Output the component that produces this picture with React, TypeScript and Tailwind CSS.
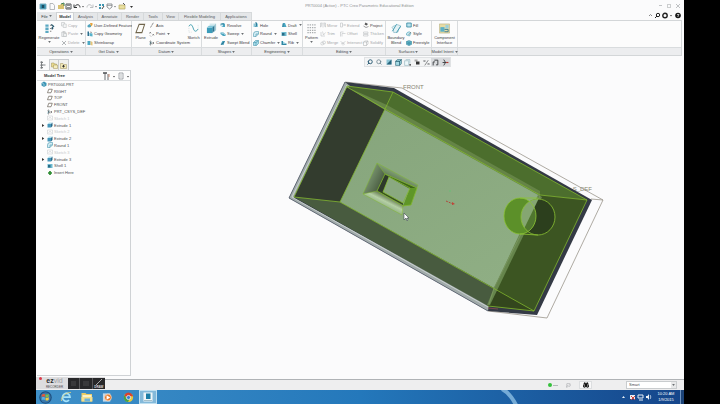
import React from 'react';
import { Search, Flag, Binoculars } from 'lucide-react';

type IconName =
  | 'copy' | 'paste' | 'delete' | 'udf' | 'copygeom' | 'wrap' | 'axis' | 'point' | 'csys'
  | 'revolve' | 'sweep' | 'blend' | 'hole' | 'round' | 'chamfer' | 'draft' | 'shell' | 'rib'
  | 'mirror' | 'trim' | 'merge' | 'extend' | 'offset' | 'intersect' | 'project' | 'thicken' | 'solidify'
  | 'fill' | 'style' | 'freestyle' | 'plane' | 'cube' | 'sketch' | 'part';

// 12x12 line drawings shared by the ribbon and the model tree
const glyphs: Record<IconName, React.ReactNode> = {
  copy: <g fill="#f4f5f5" stroke="#b4b8ba"><path d="M1 1h6v7H1z" /><path d="M4.500 4h6v7h-6z" /></g>,
  paste: <g fill="#eef0f0" stroke="#b0b4b6"><path d="M1.500 2h8v9h-8z" /><path d="M4 1h3v2H4zM5 5h6v6H5z" /></g>,
  delete: <path d="M2 2l8 8M10 2l-8 8" stroke="#9a9fa2" strokeWidth="1.500" />,
  udf: <g><path d="M1 7l4-3 3 2v4l-4 1-3-1z" fill="#4fa3bd" /><path d="M6 2h5v4l-3 3z" fill="#e8a33c" /></g>,
  copygeom: <g><path d="M1 1h3v9H1z" fill="#2d6d8c" /><path d="M5 4l6 1v6l-6-1z" fill="#58b2cb" /><path d="M6 2l4 1" stroke="#444" /></g>,
  wrap: <g><path d="M1 2h6v8H1z" fill="#4da9c4" /><path d="M7 2l4 2v7l-4-1z" fill="#e6c47a" /></g>,
  axis: <path d="M3 11L9 1" stroke="#4a4a4a" strokeDasharray="5 1" strokeWidth="1.200" />,
  point: <g stroke="#444"><path d="M1 2l3 3M4 2L1 5M7 6l3 3M10 6L7 9M2 9l2 2" /></g>,
  csys: <g stroke="#444" fill="none"><path d="M3 1v10M1 3l5 6M3 6h7M8 4l2 2-2 2" /><path d="M1 9l4-6" stroke="#2f7f97" /></g>,
  revolve: <g><path d="M1 7a5 4 0 0 1 9-3v6H5z" fill="#4ba6c2" /><path d="M1 4h7" stroke="#2c6177" /><circle cx="4" cy="7" r="2" fill="#d7eef5" /></g>,
  sweep: <g><path d="M1 3h6l4 4v3H6L1 6z" fill="#49a4bf" /><path d="M3 5h4l3 3" stroke="#e4f4f8" fill="none" /></g>,
  blend: <g><path d="M1 9L5 2h5L7 10z" fill="#3f9ab8" /><path d="M2 10L9 3" stroke="#24586d" /></g>,
  hole: <g><path d="M1 3h9v7H1z" fill="#8ccadb" /><path d="M4 1h4v8H4z" fill="#2d7f9c" /><path d="M5 2h1v6H5z" fill="#fff" /></g>,
  round: <g stroke="#2f87a3" fill="#d3edf4"><path d="M1 11V6a5 5 0 0 1 5-5h5v5l-5 5z" /><path d="M6 11V6h5" fill="none" /></g>,
  chamfer: <g stroke="#2f87a3" fill="#a9dbe8"><path d="M1 11V5l4-4h6v6l-4 4z" /><path d="M1 5h5l5-4M6 5v6" fill="none" /></g>,
  draft: <g fill="#4aa7c2"><path d="M2 10L4 2h4l3 8z" /><path d="M4 3v7" stroke="#1f566d" /></g>,
  shell: <g><path d="M1 2h10v8H1z" fill="#6fbbd0" /><path d="M2 4h5v5H2z" fill="#2a6c86" /></g>,
  rib: <g><path d="M1 10V2h3v5h7v3z" fill="#2f87a3" /><path d="M4 3l6 4H4z" fill="#8fd3e3" /></g>,
  mirror: <path d="M1 2h3l-2 8H1zM11 2H8l2 8h1zM6 1v10" stroke="#b2b6b8" fill="none" />,
  trim: <path d="M2 2v8h8M5 1l2 7 4-5" stroke="#b2b6b8" fill="none" />,
  merge: <g stroke="#b2b6b8" fill="none"><circle cx="4.500" cy="7" r="3" /><circle cx="8" cy="5" r="3" /></g>,
  extend: <path d="M1 2h4v8H1zM5 6h6M9 4l2 2-2 2" stroke="#b2b6b8" fill="none" />,
  offset: <path d="M1 11V2h6M4 11V5h7" stroke="#b2b6b8" fill="none" />,
  intersect: <path d="M1 3l5 3 5-3M6 6v5M2 8l4-2 4 3" stroke="#b2b6b8" fill="none" />,
  project: <g><path d="M5 1l5 3-3 3-4-2z" fill="#555" /><path d="M1 8l5 3 5-2" stroke="#444" fill="none" /></g>,
  thicken: <path d="M1 2h9v3H1zM1 7h9v3H1z" stroke="#b2b6b8" fill="none" />,
  solidify: <path d="M1 4l3-2h6v6l-3 3H1zM1 4h6l3-2M7 4v7" stroke="#a6abad" fill="none" />,
  fill: <path d="M1.500 2h9v8h-9z" fill="#b9e2ec" stroke="#2a7f9a" strokeWidth="1.500" />,
  style: <g><path d="M1 8a5 5 0 0 1 9-4l-3 6z" fill="#c7e9f0" stroke="#3691ac" /><path d="M5 8l5-6" stroke="#555" /></g>,
  freestyle: <g stroke="#2d7f97" fill="#66b9cc"><path d="M1 3l5-2 5 2v6l-5 2-5-2z" /><path d="M1 3l5 2 5-2M6 5v6M1 6l5 2 5-2" fill="none" /></g>,
  plane: <path d="M3.500 2.500h7l-2.500 7H1z" fill="#fff" stroke="#5c5548" strokeWidth="1.300" />,
  cube: <g><path d="M1 4h7v7H1z" fill="#4797bb" /><path d="M1 4l3-3h7L8 4z" fill="#b5dfeb" /><path d="M8 4l3-3v7l-3 3z" fill="#2c6a8a" /></g>,
  sketch: <g stroke="#c3c7c9" fill="none"><path d="M1 2h10v8H1z" /><path d="M3 8l3-4 3 4" /></g>,
  part: <g><path d="M1 4l5-3 5 3v5l-5 3-5-3z" fill="#3d95b5" /><path d="M2 4l4 2v5" stroke="#d9f1f7" fill="none" /></g>,
};

const Glyph: React.FC<{ name: IconName }> = ({ name }) => (
  <svg viewBox="0 0 12 12" className="h-[6px] w-[6px] shrink-0" fill="none" aria-hidden="true">
    {glyphs[name]}
  </svg>
);

const Caret = () => (
  <svg viewBox="0 0 4 3" className="h-[2px] w-[3px] shrink-0" aria-hidden="true">
    <path d="M0 0h4L2 3z" fill="#6b6f72" />
  </svg>
);

interface Command {
  icon: IconName;
  label: string;
  menu?: boolean;
  off?: boolean;
}

const CommandColumn: React.FC<{ items: Command[]; className?: string }> = ({ items, className = '' }) => (
  <div className={`grid grid-rows-3 ${className}`}>
    {items.map((item) => (
      <button
        key={item.label}
        disabled={item.off}
        className={`flex items-center gap-px whitespace-nowrap ${item.off ? 'text-[#a5a8aa]' : 'text-[#3d4043]'}`}
      >
        <Glyph name={item.icon} />
        {item.label}
        {item.menu && <span className="pl-px"><Caret /></span>}
      </button>
    ))}
  </div>
);

const BigButton: React.FC<{ label: string; menu?: boolean; className: string; children: React.ReactNode }> = ({
  label,
  menu,
  className,
  children,
}) => (
  <button className={`flex shrink-0 flex-col items-center pt-[2px] text-[#3d4043] ${className}`}>
    <svg viewBox="0 0 24 24" className="h-[11px] w-[11px]" fill="none" aria-hidden="true">{children}</svg>
    <span className="pt-px leading-[5px]">{label}</span>
    {menu && <span className="pt-px"><Caret /></span>}
  </button>
);

const Group: React.FC<{ title: string; className: string; children: React.ReactNode }> = ({ title, className, children }) => (
  <section className={`flex shrink-0 flex-col border-r border-[#d9dcde] ${className}`}>
    <div className="flex h-[26px] bg-[#fcfcfc]">{children}</div>
    <button className="flex h-[8px] items-center justify-center gap-px border-t border-[#d9dcde] bg-[#ecedef] whitespace-nowrap text-[#44474a]">
      {title} <Caret />
    </button>
  </section>
);

const tabs = [
  { label: 'Analysis', width: 'w-[24px]' },
  { label: 'Annotate', width: 'w-[24px]' },
  { label: 'Render', width: 'w-[22px]' },
  { label: 'Tools', width: 'w-[19px]' },
  { label: 'View', width: 'w-[16px]' },
  { label: 'Flexible Modeling', width: 'w-[42px]' },
  { label: 'Applications', width: 'w-[31px]' },
];

const TitleBar = () => (
  <header className="grid h-[11px] grid-cols-[1fr_auto_1fr] items-center pr-[4px] pl-[3px] text-[#8d9092]">
    <svg viewBox="0 0 100 10" className="h-[10px] w-[100px]" fill="none" role="img" aria-label="Quick access toolbar">
      <path d="M1 3h6v5H1z" fill="#2d87a5" stroke="#7fb1c3" />
      <path d="M3 4h2v3H3z" fill="#1d4d62" />
      <path d="M11 2.500h3l1.500 2v4H11z" stroke="#a6aaac" strokeWidth=".8" />
      <path d="M19 4h2l1-1h3v5h-6z" fill="#d9c271" /><path d="M22 3l3-1v3" stroke="#3a7d4e" />
      <path d="M27 3h5v5h-5z" stroke="#55595c" /><path d="M28 3h3v2h-3zM28 6h3v2h-3z" fill="#8b8f92" />
      <path d="M36 5.500C37 3 41 3 41 6.500M35 3.500v3h3" stroke="#2f3234" />
      <path d="M43 5h2l-1 1.500z" fill="#555" />
      <path d="M53 5.500C52 3 48 3 48 6.500M54 3.500v3h-3" stroke="#bcbfc1" />
      <path d="M56 5h2l-1 1.500z" fill="#777" />
      <path d="M60 3h2v2h-2zM60 6h2v2h-2zM63 3h2v2h-2z" fill="#3b94b0" /><path d="M63 8l2-3" stroke="#444" />
      <path d="M68 3h5v3l-2.500 2L68 6z" stroke="#777b7e" strokeWidth=".8" /><path d="M68 4.500h5" stroke="#777b7e" strokeWidth=".6" />
      <path d="M75 5h2l-1 1.500z" fill="#777" />
      <path d="M80 4h6v4h-6z" fill="#e9df9f" stroke="#b8ab64" strokeWidth=".7" /><path d="M84 2l2 2" stroke="#555" />
      <path d="M91 5h3l-1.500 2z" fill="#333" />
    </svg>
    <h1 className="whitespace-nowrap">PRT0004 (Active) - PTC Creo Parametric Educational Edition</h1>
    <div className="flex items-center justify-end gap-[5px]">
      <button aria-label="Minimize" className="h-px w-[3px] bg-[#c2c4c6]" />
      <button aria-label="Restore" className="h-[4px] w-[4px] border border-[#cccecf]" />
      <button aria-label="Close" className="h-[4px] w-[4px]">
        <svg viewBox="0 0 4 4" className="h-[4px] w-[4px]"><path d="M0 0l4 4M4 0L0 4" stroke="#bfc1c3" /></svg>
      </button>
    </div>
  </header>
);

const TabRow = () => (
  <nav className="flex h-[9px] items-stretch justify-between pt-px pl-px">
    <div className="flex bg-[#e5e7e9] text-[#55585b]">
      <button className="flex w-[19px] items-center justify-center gap-px text-[#33363a]">File <Caret /></button>
      <button className="w-[18px] border-x border-t border-[#cfd2d4] bg-[#fcfcfc] font-bold text-[#2f3235]">Model</button>
      {tabs.map((tab) => (
        <button key={tab.label} className={`border-t border-r border-[#d6d9db] whitespace-nowrap ${tab.width}`}>
          {tab.label}
        </button>
      ))}
    </div>
    <svg viewBox="0 0 36 8" className="h-[8px] w-[36px]" fill="none" role="img" aria-label="Search, settings and help">
      <path d="M1 4l1.500-1.500L4 4" stroke="#888" />
      <circle cx="10" cy="3" r="1.700" stroke="#222" /><path d="M9 4L7 6" stroke="#222" />
      <circle cx="17" cy="3.500" r="2.200" stroke="#222" strokeWidth="1.400" />
      <path d="M22 3h2l-1 1.500z" fill="#444" />
      <circle cx="30" cy="3.500" r="2.800" fill="#161616" /><path d="M29 2.500h2L30 4v1" stroke="#fff" strokeWidth=".7" />
    </svg>
  </nav>
);

const Ribbon = () => (
  <div className="mr-[2px] ml-px flex border-y border-r border-[#d3d6d8] bg-[#fcfcfc]">
    <Group title="Operations" className="w-[49px]">
      <BigButton label="Regenerate" menu className="w-[24px]">
        <path d="M3 3h7v5H3zM3 10h7v5H3zM3 17h7v5H3z" fill="#5ba8c2" />
        <path d="M13 5h5M13 12h4M13 18h3" stroke="#777" strokeWidth="2" />
        <path d="M16 3l5 4-4 4M20 11l-3 3" stroke="#24566c" strokeWidth="2.500" />
      </BigButton>
      <CommandColumn
        items={[
          { icon: 'copy', label: 'Copy', off: true },
          { icon: 'paste', label: 'Paste', menu: true, off: true },
          { icon: 'delete', label: 'Delete', menu: true, off: true },
        ]}
      />
    </Group>
    <Group title="Get Data" className="w-[46px]">
      <CommandColumn
        className="pl-px"
        items={[
          { icon: 'udf', label: 'User-Defined Feature' },
          { icon: 'copygeom', label: 'Copy Geometry' },
          { icon: 'wrap', label: 'Shrinkwrap' },
        ]}
      />
    </Group>
    <Group title="Datum" className="w-[70px]">
      <BigButton label="Plane" className="w-[17px]">
        <path d="M9 3h12l-6 18H2z" fill="#fdfcf8" stroke="#70654c" strokeWidth="2.200" />
      </BigButton>
      <CommandColumn
        className="w-[37px]"
        items={[
          { icon: 'axis', label: 'Axis' },
          { icon: 'point', label: 'Point', menu: true },
          { icon: 'csys', label: 'Coordinate System' },
        ]}
      />
      <BigButton label="Sketch" className="w-[15px]">
        <path d="M2 7c5-8 8 0 10 6s6 7 10 0" stroke="#3a9aac" strokeWidth="2" />
        <path d="M2 7v13M22 4v9M2 20h8" stroke="#b9c7cb" strokeDasharray="2 2" />
      </BigButton>
    </Group>
    <Group title="Shapes" className="w-[50px]">
      <BigButton label="Extrude" className="w-[18px]">
        <path d="M8 1h14v14l-5 5H8z" fill="#d3e9ee" /><path d="M17 6l5-5v14l-5 5z" fill="#a3c9d4" />
        <path d="M2 10h12v12H2z" fill="#3b9cba" /><path d="M2 10l4-4h12l-4 4z" fill="#7fc6d9" /><path d="M14 10l4-4v11l-4 5z" fill="#2b7693" />
      </BigButton>
      <CommandColumn
        items={[
          { icon: 'revolve', label: 'Revolve' },
          { icon: 'sweep', label: 'Sweep', menu: true },
          { icon: 'blend', label: 'Swept Blend' },
        ]}
      />
    </Group>
    <Group title="Engineering" className="w-[51px]">
      <CommandColumn
        className="w-[29px] pl-px"
        items={[
          { icon: 'hole', label: 'Hole' },
          { icon: 'round', label: 'Round', menu: true },
          { icon: 'chamfer', label: 'Chamfer', menu: true },
        ]}
      />
      <CommandColumn
        items={[
          { icon: 'draft', label: 'Draft', menu: true },
          { icon: 'shell', label: 'Shell' },
          { icon: 'rib', label: 'Rib', menu: true },
        ]}
      />
    </Group>
    <Group title="Editing" className="w-[83px]">
      <BigButton label="Pattern" menu className="w-[17px]">
        <path d="M3 4h18M3 10h18M3 16h18M3 21h18" stroke="#a9adaf" strokeWidth="3" strokeDasharray="3 2" />
      </BigButton>
      <CommandColumn
        className="w-[20px]"
        items={[
          { icon: 'mirror', label: 'Mirror', off: true },
          { icon: 'trim', label: 'Trim', off: true },
          { icon: 'merge', label: 'Merge', off: true },
        ]}
      />
      <CommandColumn
        className="w-[23px]"
        items={[
          { icon: 'extend', label: 'Extend', off: true },
          { icon: 'offset', label: 'Offset', off: true },
          { icon: 'intersect', label: 'Intersect', off: true },
        ]}
      />
      <CommandColumn
        items={[
          { icon: 'project', label: 'Project' },
          { icon: 'thicken', label: 'Thicken', off: true },
          { icon: 'solidify', label: 'Solidify', off: true },
        ]}
      />
    </Group>
    <Group title="Surfaces" className="w-[46px]">
      <BigButton label="Boundary Blend" className="w-[20px]">
        <path d="M2 10c3-6 8-2 10-7l9 3c-1 7-5 5-6 14l-9 1c-1-5 1-8-4-11z" fill="#e4f2f5" stroke="#86b7c4" strokeWidth="1.500" />
        <path d="M3 18L12 3M12 21l9-14" stroke="#3b97af" strokeWidth="2" />
      </BigButton>
      <CommandColumn
        items={[
          { icon: 'fill', label: 'Fill' },
          { icon: 'style', label: 'Style' },
          { icon: 'freestyle', label: 'Freestyle' },
        ]}
      />
    </Group>
    <Group title="Model Intent" className="w-[26px]">
      <BigButton label="Component Interface" className="w-[25px]">
        <path d="M1 2h22v20H1z" fill="#e7dba4" stroke="#a8a271" />
        <path d="M3 9h9v10H3z" fill="#5bb0c6" /><path d="M14 4h7v8h-7z" fill="#9bd0dc" />
        <path d="M12 14h8v5h-8" stroke="#3a7c90" strokeWidth="2" />
      </BigButton>
    </Group>
    <div className="flex flex-1 flex-col">
      <div className="h-[26px]" />
      <div className="h-[8px] border-t border-[#d9dcde] bg-[#ecedef]" />
    </div>
  </div>
);

interface TreeNode {
  icon: IconName;
  label: string;
  branch?: boolean;
  off?: boolean;
}

const treeNodes: TreeNode[] = [
  { icon: 'plane', label: 'RIGHT' },
  { icon: 'plane', label: 'TOP' },
  { icon: 'plane', label: 'FRONT' },
  { icon: 'csys', label: 'PRT_CSYS_DEF' },
  { icon: 'sketch', label: 'Sketch 1', off: true },
  { icon: 'cube', label: 'Extrude 1', branch: true },
  { icon: 'sketch', label: 'Sketch 2', off: true },
  { icon: 'cube', label: 'Extrude 2', branch: true },
  { icon: 'round', label: 'Round 1' },
  { icon: 'sketch', label: 'Sketch 3', off: true },
  { icon: 'cube', label: 'Extrude 3', branch: true },
  { icon: 'shell', label: 'Shell 1' },
];

const ModelTree = () => (
  <aside className="ml-px flex w-[94px] shrink-0 flex-col pt-[3px]">
    <div className="flex h-[11px]">
      <button aria-label="Model Tree" className="flex w-[12px] items-center justify-center">
        <svg viewBox="0 0 12 16" className="h-[8px] w-[6px]" fill="none">
          <path d="M3 1v14M3 3h3M3 8h8M3 13h3" stroke="#595d60" strokeWidth="1.500" />
          <path d="M1 1h4v3H1zM1 7h4v3H1zM1 12h4v3H1z" fill="#777b7e" />
        </svg>
      </button>
      <button aria-label="Folder Browser" className="flex w-[10px] items-center justify-center border border-b-0 border-[#c9cccf] bg-[#f1f1ee]">
        <svg viewBox="0 0 14 14" className="h-[7px] w-[7px]"><path d="M1 2h5l1 2h4v6H1z" fill="#eadb8d" stroke="#9f915a" /><path d="M5 6h8v7H5z" fill="#f5edbd" stroke="#9f915a" /></svg>
      </button>
      <button aria-label="Favorites" className="flex w-[10px] items-center justify-center border border-b-0 border-l-0 border-[#c9cccf] bg-[#f1f1ee]">
        <svg viewBox="0 0 14 14" className="h-[7px] w-[7px]"><path d="M1 3h5l1 2h6v8H1z" fill="#f2e8b5" stroke="#9f915a" /><path d="M7 6v5M4.500 8.500h5" stroke="#333" strokeWidth="2" /></svg>
      </button>
    </div>
    <div className="flex flex-1 flex-col border border-l-0 border-[#cfd2d5] bg-[#fdfdfd]">
      <div className="flex h-[10px] items-center justify-between border-b border-[#dcdfe1] pr-px pl-[7px]">
        <h2 className="font-semibold text-[#303336]">Model Tree</h2>
        <svg viewBox="0 0 28 10" className="h-[10px] w-[28px]" fill="none" role="img" aria-label="Tree settings">
          <path d="M4 2v7M7 3v6" stroke="#6b6f72" /><path d="M2 2h4" stroke="#4b4f52" strokeWidth="1.500" /><path d="M8 3v3" stroke="#c98a72" />
          <path d="M12 5h2l-1 1.500z" fill="#444" />
          <path d="M18 2h4v6h-4z" fill="#fff" stroke="#8b9094" strokeWidth=".8" /><path d="M19 4h2M19 6h2" stroke="#8b9094" strokeWidth=".6" />
          <path d="M26 5h2l-1 1.500z" fill="#444" />
        </svg>
      </div>
      <ul className="grid h-[95px] auto-rows-fr text-[#4a4d50]">
        <li className="flex items-center gap-px pl-[4px]"><Glyph name="part" />PRT0004.PRT</li>
        {treeNodes.map((node) => (
          <li key={node.label} className={`flex items-center gap-px pl-[5px] ${node.off ? 'text-[#c6c9cb]' : ''}`}>
            <span className="w-[4px]">
              {node.branch && (
                <svg viewBox="0 0 4 4" className="h-[3px] w-[3px]"><path d="M0 0l3 2-3 2z" fill="#333" /></svg>
              )}
            </span>
            <Glyph name={node.icon} />
            {node.label}
          </li>
        ))}
        <li className="flex items-center gap-[2px] pl-[11px]">
          <svg viewBox="0 0 6 6" className="h-[4px] w-[4px]"><path d="M3 0v6M0 3h6" stroke="#2a8a2f" strokeWidth="2.500" /></svg>
          Insert Here
        </li>
      </ul>
    </div>
  </aside>
);

const ViewToolbar = () => (
  <div className="mt-px flex h-[10px] w-[87px] items-center self-center border border-[#e0e2e4] bg-[#f3f4f5]">
    <button aria-label="Zoom In" className="flex flex-1 justify-center"><Search className="h-[6px] w-[6px] -scale-x-100 text-[#33627a]" strokeWidth={4} /></button>
    <button aria-label="Zoom Out" className="flex flex-1 justify-center"><Search className="h-[6px] w-[6px] text-[#667d89]" strokeWidth={3} /></button>
    <button aria-label="Repaint" className="flex flex-1 justify-center">
      <svg viewBox="0 0 12 12" className="h-[6px] w-[6px]"><path d="M1 1h10v10H1z" fill="#8ec5d5" /><path d="M11 1v10H1z" fill="#27647c" /></svg>
    </button>
    <button aria-label="Display Style" className="flex flex-1 justify-center">
      <svg viewBox="0 0 12 12" className="h-[7px] w-[7px]" fill="#a6dbe5" stroke="#245f72"><path d="M1 4h7v7H1zM1 4l3-3h7L8 4zM8 4l3-3v7l-3 3z" /></svg>
    </button>
    <button aria-label="Saved Orientations" className="flex flex-1 justify-center">
      <svg viewBox="0 0 12 12" className="h-[7px] w-[7px]" fill="#eef8fa" stroke="#8eb0bb"><path d="M1 3h7v8H1zM3 1h7v7" /><path d="M9 10h3" stroke="#333" strokeWidth="2" /></svg>
    </button>
    <button aria-label="View Manager" className="flex flex-1 justify-center">
      <svg viewBox="0 0 12 12" className="h-[6px] w-[6px]"><path d="M1 1h6v4H1z" fill="#aaa" /><path d="M4 5h7v6H4z" fill="#333" /></svg>
    </button>
    <button aria-label="Datum Display Filters" className="flex flex-1 justify-center">
      <svg viewBox="0 0 12 12" className="h-[7px] w-[7px]" stroke="#3f4447" fill="none"><path d="M1 2l3 3M4 2L1 5M3 11l6-9M8 7l3 3M11 7l-3 3" /></svg>
    </button>
    <button aria-label="Annotation Display" className="flex h-full flex-1 items-center justify-center bg-[#d9dbde]">
      <svg viewBox="0 0 12 12" className="h-[7px] w-[7px]" stroke="#33373a" fill="none"><path d="M2 11V5h3M4 2h6v8H7" strokeWidth="1.500" /></svg>
    </button>
    <button aria-label="Spin Center" className="flex h-full flex-1 items-center justify-center bg-[#d9dbde]">
      <svg viewBox="0 0 12 12" className="h-[7px] w-[7px]" stroke="#33373a" fill="none"><path d="M3 1l3 5-3 5M1 6h6" strokeWidth="1.500" /><path d="M7 6h4" stroke="#b43b34" strokeWidth="2" /></svg>
    </button>
  </div>
);

const Model = () => (
  <svg viewBox="131 67 553 309" className="min-h-0 w-full flex-1" fill="none" role="img" aria-label="Shelled part in the graphics window">
    <defs>
      <linearGradient id="floor" x1="385" y1="109" x2="494" y2="288" gradientUnits="userSpaceOnUse">
        <stop offset="0" stopColor="#87a67d" />
        <stop offset="1" stopColor="#8fae84" />
      </linearGradient>
      <linearGradient id="bevelLeft" x1="366" y1="178" x2="382" y2="186" gradientUnits="userSpaceOnUse">
        <stop offset="0" stopColor="#7e9a74" />
        <stop offset="1" stopColor="#46583e" />
      </linearGradient>
      <linearGradient id="bevelBottom" x1="387" y1="196" x2="382" y2="206" gradientUnits="userSpaceOnUse">
        <stop offset="0" stopColor="#63784f" />
        <stop offset=".5" stopColor="#b5d0a5" />
        <stop offset="1" stopColor="#90af84" />
      </linearGradient>
      <linearGradient id="bevelTop" x1="398" y1="172" x2="394" y2="180" gradientUnits="userSpaceOnUse">
        <stop offset="0" stopColor="#87a57c" />
        <stop offset="1" stopColor="#5f7b51" />
      </linearGradient>
      <clipPath id="nearCircle"><ellipse cx="538" cy="217" rx="17" ry="18" /></clipPath>
    </defs>

    {/* datum tags and plane outline */}
    <g fontFamily="Liberation Sans, sans-serif" fontSize="6" fill="#85836f">
      <text x="403" y="89">FRONT</text>
      <text x="592" y="191" textAnchor="end">S_DEF</text>
    </g>
    <path d="M345 82l57 6 201 112-56 118-59-7M591 199l12 1" stroke="#9a958b" strokeWidth=".8" />

    {/* shell rim */}
    <path d="M345 82l49 6 198 112-55 115-49-4-199-113z" fill="#343a45" />
    <path d="M345 82l5 4-56 112 195 107-1 6-199-113z" fill="#a1abaa" />
    <path d="M345 82l-56 116 199 113" stroke="#58606f" strokeWidth=".8" />
    <path d="M347 85l-55 112 196 110" stroke="#dadfdf" strokeWidth=".7" />

    {/* inner walls */}
    <path d="M347 87l38 22-45 93-46-5z" fill="#333c2e" />
    <path d="M347 86l46 6-8 17z" fill="#49652f" />
    <path d="M393 92l194 108-47-5-155-86z" fill="#4c6e2d" />
    <path d="M540 195l47 5-53 111-46-5z" fill="#3c5522" />
    <path d="M294 197l46 5 154 86-6 18z" fill="#485b3f" />
    <path d="M494 288l40 23-46-5z" fill="#33461d" />
    <path d="M385 109l155 86-46 93-154-86z" fill="url(#floor)" />
    <path d="M347 87l40 18 153 86v5l-155-86z" fill="#658446" />
    <path d="M538 195l4 2-52 108-3 0 7-17z" fill="#66854c" />
    <path d="M540 196l-46 92-5 16" stroke="#7d9a63" strokeWidth=".8" />

    {/* rectangular pocket */}
    <path d="M377 163l-14 31 17-2 6-18z" fill="url(#bevelLeft)" />
    <path d="M377 163l41 22-2 4-31-15z" fill="url(#bevelTop)" />
    <path d="M363 194l39 21 2-10-27-14z" fill="url(#bevelBottom)" />
    <path d="M385 174l4 3-6 16-6-2z" fill="#2e392b" />
    <path d="M389 177l21 11-7 15-20-11z" fill="#8aa980" />
    <path d="M385 174l32 14-7 1-21-12z" fill="#3d6519" />
    <path d="M410 188l7 0-6 17-8 1z" fill="#5f9627" />
    <path d="M377 191l26 14v-2l-20-11z" fill="#375020" />
    <g stroke="#83b82e" strokeWidth=".8">
      <path d="M385 174l-8 17 26 15 8-1 6-17zM389 177l21 11-7 15M389 177l-6 15 20 11" />
      <path d="M377 163l8 11M377 163l-14 31 14-3M363 194l39 21 1-10M377 163l41 22-1 3" strokeWidth=".5" />
    </g>

    {/* round hole */}
    <ellipse cx="538" cy="217" rx="17" ry="18" fill="#2c3f1d" />
    <ellipse cx="520" cy="216" rx="16" ry="18" fill="#5c9029" />
    <g clipPath="url(#nearCircle)">
      <ellipse cx="520" cy="216" rx="16" ry="18" fill="#50762f" />
      <path d="M510 196h30l-20 41h-10z" fill="#85a671" />
    </g>
    <g stroke="#8bc334" strokeWidth=".8">
      <ellipse cx="538" cy="217" rx="17" ry="18" />
      <ellipse cx="520" cy="216" rx="16" ry="18" />
      <path d="M520 198h18M520 234l18 1" />
    </g>

    {/* highlighted edges */}
    <g stroke="#83b82e" strokeWidth=".8">
      <path d="M347 86l46 6 194 108-53 111-46-5M347 86l-53 111 46 5 194 109" />
      <path d="M393 92l-8 17-45 93M385 109l155 86 47 5M347 87l38 22" />
    </g>

    {/* spin center */}
    <path d="M446 201l7 3" stroke="#b0473c" strokeDasharray="2 1" />
    <path d="M452 202l3 2-3 1z" fill="#c04438" />
    <path d="M449 191h2" stroke="#68bd76" />
    <path d="M488 308l10 1" stroke="#8d4b50" strokeWidth=".8" />
    <path d="M404 213v7l2-2 1 3 1-1-1-2h2z" fill="#fff" stroke="#3f4b52" strokeWidth=".6" />
  </svg>
);

const StatusBar = () => (
  <div className="relative flex h-[11px] items-center justify-end gap-[8px] border-t border-[#b0b3b6] bg-[#eeeeef] pr-[7px]">
    <div className="absolute bottom-px left-0 flex h-[12px] w-[69px] items-center gap-[3px] bg-[#dddddf] pl-[8px]">
      <span className="absolute top-0 left-[3px] h-[3px] w-[3px] rounded-full bg-[#dc3a4a]" />
      <div className="w-[21px] text-center">
        <p className="text-[7px] leading-[8px] font-bold text-[#2c2c2e]">ez<span className="font-normal text-[#a0a0a4]">vid</span></p>
        <p className="text-[3px] leading-[4px] text-[#4c4c4e]">RECORDER</p>
      </div>
      <div className="grid h-[11px] w-[37px] grid-cols-3 divide-x divide-[#58585a] bg-[#28282a]">
        <button aria-label="Record" className="p-[3px]"><span className="block h-full bg-[#39393b]" /></button>
        <button aria-label="Pause" className="p-[3px]"><span className="block h-full bg-[#39393b]" /></button>
        <button className="flex flex-col items-center justify-end text-[3px] leading-[4px] font-bold text-[#d8d8d8]">
          <svg viewBox="0 0 8 6" className="h-[6px] w-[8px]"><path d="M1 6l6-6" stroke="#aaa" /></svg>
          DRAW
        </button>
      </div>
    </div>
    <div className="flex items-center gap-px">
      <span className="h-[4px] w-[4px] rounded-full bg-[#35c13c]" />
      <span className="h-px w-[5px] bg-[#b5b8ba]" />
    </div>
    <Flag className="h-[5px] w-[5px] text-[#85898c]" />
    <button aria-label="Find" className="flex h-[8px] w-[13px] items-center justify-center border border-[#dcdee0] bg-[#f8f8f9]">
      <Binoculars className="h-[6px] w-[6px] text-[#111]" strokeWidth={4} />
    </button>
    <div className="relative ml-[26px]">
      <select aria-label="Selection filter" defaultValue="Smart" className="block h-[8px] w-[51px] appearance-none border border-[#c9ccce] bg-white pl-[2px] text-[4px] leading-[6px] text-[#45484b]">
        <option>Smart</option>
        <option>Geometry</option>
      </select>
      <span className="pointer-events-none absolute top-px right-px flex h-[6px] w-[5px] items-center justify-center bg-[#e8e9ea]"><Caret /></span>
    </div>
  </div>
);

const Taskbar = () => (
  <footer className="flex h-[14px] items-center bg-linear-to-r from-[#3f90c8] via-[#2478bb] via-50% to-[#15458a] text-white">
    <button aria-label="Start" className="flex w-[19px] justify-center">
      <svg viewBox="0 0 24 24" className="h-[13px] w-[13px]">
        <circle cx="12" cy="12" r="11.500" fill="#1d4c7c" /><circle cx="12" cy="12" r="9.500" fill="#3777ab" />
        <path d="M5 7c2-2 4-2 6-1v5c-2-1-4-1-6 0z" fill="#e5593a" /><path d="M12 6c2 1 4 1 6-1v5c-2 2-4 2-6 1z" fill="#83bd48" />
        <path d="M5 12c2-1 4-1 6 0v5c-2-1-4-1-6 0z" fill="#58afe1" /><path d="M12 12c2 1 4 1 6-1v5c-2 2-4 2-6 1z" fill="#f2cb45" />
      </svg>
    </button>
    <button aria-label="Internet Explorer" className="flex w-[21px] justify-center">
      <svg viewBox="0 0 24 24" className="h-[12px] w-[12px]" fill="none">
        <path d="M18 18a7.500 8 0 1 1 2-6H7" stroke="#a4e2fb" strokeWidth="3.500" />
        <path d="M3 20C1 12 13 2 22 3" stroke="#efd66f" strokeWidth="1.500" />
      </svg>
    </button>
    <button aria-label="Windows Explorer" className="flex w-[21px] justify-center">
      <svg viewBox="0 0 24 20" className="h-[10px] w-[12px]">
        <path d="M1 2h8l2 2h11v15H1z" fill="#eacb65" /><path d="M3 6h18v6H3z" fill="#fbf3c8" /><path d="M1 10h22v9H1z" fill="#f5df8b" /><path d="M7 13h11v6H7z" fill="#6eb2d9" />
      </svg>
    </button>
    <button aria-label="Media Player" className="flex w-[21px] justify-center">
      <svg viewBox="0 0 24 24" className="h-[11px] w-[11px]">
        <path d="M2 3h16v18H2z" fill="#c3d9e8" /><circle cx="13" cy="12" r="7.500" fill="#e6792c" stroke="#f7e7d6" strokeWidth="1.500" /><path d="M10 7l8 5-8 5z" fill="#fff" />
      </svg>
    </button>
    <button aria-label="Chrome" className="flex w-[21px] justify-center">
      <svg viewBox="0 0 24 24" className="h-[11px] w-[11px]">
        <circle cx="12" cy="12" r="10" fill="#e8c93a" /><path d="M3 7a10 10 0 0 1 18 0l1 2H12l-3 5z" fill="#d9412f" />
        <path d="M3 7a10 10 0 0 0 8 15l4-8H8z" fill="#40a24d" /><circle cx="12" cy="12" r="4.500" fill="#397fd1" stroke="#fff" strokeWidth="1.500" />
      </svg>
    </button>
    <button aria-label="Creo Parametric" className="flex h-full w-[18px] items-center justify-center border border-[#bfdff0] bg-[#83b9da]">
      <svg viewBox="0 0 20 20" className="h-[10px] w-[10px]"><path d="M1 1h18v18H1z" fill="#f0f6f8" /><path d="M6 3h9v11H6z" fill="#1b7da6" /><path d="M2 16h16v2H2z" fill="#a5bfca" /></svg>
    </button>
    <div className="flex h-full flex-1 justify-end overflow-hidden">
      <svg viewBox="0 0 34 14" className="h-[14px] w-[34px]" fill="none"><path d="M13 -1c6 3 10 8 14 16" stroke="#85b9df" strokeWidth="4" opacity=".85" /></svg>
    </div>
    <div className="flex w-[161px] items-center justify-end gap-[4px]">
      <svg viewBox="0 0 30 8" className="h-[8px] w-[30px]" fill="none" role="img" aria-label="Notification area">
        <path d="M0 5l1.500-2L3 5z" fill="#e8f0f7" />
        <path d="M8 2h5v4H8z" fill="#e6ebf0" /><path d="M9 3l4 4M13 3L9 7" stroke="#d5433b" />
        <path d="M16 2h5v3h-5zM17 7h4" stroke="#e4edf6" />
        <path d="M24 3h1.500L27 1v6l-1.500-2H24z" fill="#f1f5f9" /><path d="M28 2c1 1 1 3 0 4" stroke="#e4edf6" strokeWidth=".7" />
      </svg>
      <div className="w-[20px] text-center leading-[6px] whitespace-nowrap">
        <p>10:20 AM</p>
        <p>1/9/2015</p>
      </div>
      <button aria-label="Show desktop" className="h-[14px] w-[4px] border-l border-[#6f93bf] bg-[#1c4377]" />
    </div>
  </footer>
);

const App: React.FC = () => {
  return (
    <div className="min-h-screen bg-black px-9 font-['Liberation_Sans',sans-serif] text-[4px] leading-[5px]">
      <div className="flex h-screen flex-col bg-[#fbfbfc]">
        <TitleBar />
        <TabRow />
        <Ribbon />
        <main className="flex min-h-0 flex-1">
          <ModelTree />
          <div className="flex min-w-0 flex-1 flex-col">
            <ViewToolbar />
            <Model />
          </div>
        </main>
        <div className="h-[3px] shrink-0" />
        <StatusBar />
        <Taskbar />
      </div>
    </div>
  );
};

export default App;
